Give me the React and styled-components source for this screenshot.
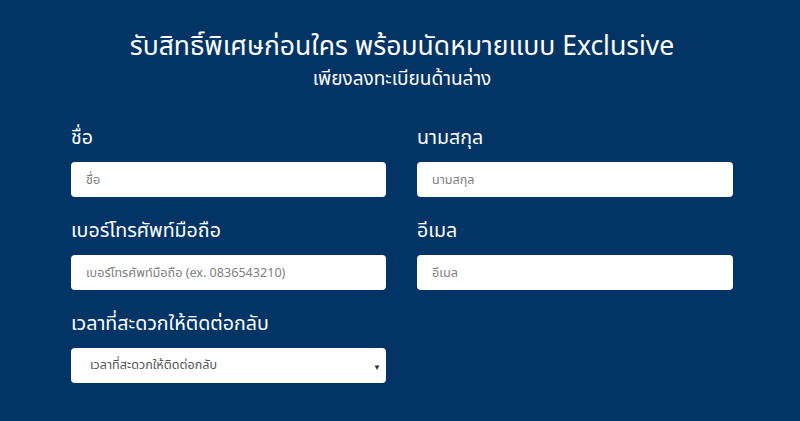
import React from "react";
import styled, { createGlobalStyle } from "styled-components";

const Global = createGlobalStyle`
  html, body { margin: 0; padding: 0; background: #033466; }
  body { font-family: "Noto Sans", "Noto Sans Thai", sans-serif; }
`;

const Page = styled.div`
  width: 800px;
  height: 421px;
  background: #033466;
  color: #fff;
  box-sizing: border-box;
  padding: 28px 67px 0 71px;
`;

const Title = styled.h1`
  margin: 0;
  text-align: center;
  font-weight: 400;
  font-size: 26.5px;
  line-height: 34px;
`;

const Subtitle = styled.h2`
  margin: 1px 0 0;
  text-align: center;
  font-weight: 400;
  font-size: 19px;
  line-height: 30px;
`;

const Grid = styled.div`
  margin-top: 30px;
  display: grid;
  grid-template-columns: 315px 316px;
  column-gap: 31px;
  row-gap: 19px;
`;

const Field = styled.div`
  display: flex;
  flex-direction: column;
`;

const Label = styled.label`
  font-size: 19.6px;
  line-height: 28px;
  margin-bottom: 11px;
`;

const Input = styled.input`
  box-sizing: border-box;
  height: 35px;
  width: 100%;
  border: none;
  border-radius: 4px;
  background: #fff;
  padding: 0 15px;
  font-family: inherit;
  font-size: 12.6px;
  color: #333;
  outline: none;
  &::placeholder { color: #808080; }
`;

const SelectBox = styled.div`
  position: relative;
  box-sizing: border-box;
  height: 35px;
  border-radius: 4px;
  background: #fff;
  display: flex;
  align-items: center;
  padding: 0 19px;
  font-size: 12.6px;
  color: #555;
`;

const Caret = styled.span`
  position: absolute;
  right: 5px;
  top: 50%;
  transform: translateY(-50%);
  font-size: 8px;
  color: #333;
`;

export default function App() {
  return (
    <>
      <Global />
      <Page>
        <Title>รับสิทธิ์พิเศษก่อนใคร พร้อมนัดหมายแบบ Exclusive</Title>
        <Subtitle>เพียงลงทะเบียนด้านล่าง</Subtitle>
        <Grid>
          <Field>
            <Label>ชื่อ</Label>
            <Input placeholder="ชื่อ" />
          </Field>
          <Field>
            <Label>นามสกุล</Label>
            <Input placeholder="นามสกุล" />
          </Field>
          <Field>
            <Label>เบอร์โทรศัพท์มือถือ</Label>
            <Input placeholder="เบอร์โทรศัพท์มือถือ (ex. 0836543210)" />
          </Field>
          <Field>
            <Label>อีเมล</Label>
            <Input placeholder="อีเมล" />
          </Field>
          <Field>
            <Label>เวลาที่สะดวกให้ติดต่อกลับ</Label>
            <SelectBox>
              เวลาที่สะดวกให้ติดต่อกลับ
              <Caret>▼</Caret>
            </SelectBox>
          </Field>
        </Grid>
      </Page>
    </>
  );
}
